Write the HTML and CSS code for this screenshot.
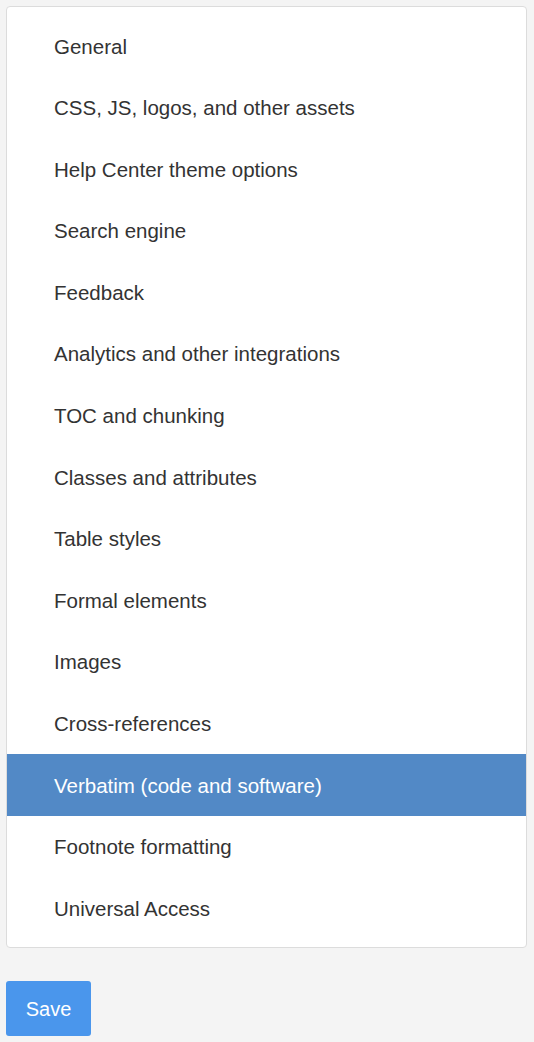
FILE: index.html
```html
<!DOCTYPE html>
<html lang="en">
<head>
<meta charset="utf-8">
<title>Settings</title>
<link rel="stylesheet" href="styles.css">
</head>
<body>
<div class="page">
  <ul class="menu">
    <li class="item">General</li>
    <li class="item">CSS, JS, logos, and other assets</li>
    <li class="item">Help Center theme options</li>
    <li class="item">Search engine</li>
    <li class="item">Feedback</li>
    <li class="item">Analytics and other integrations</li>
    <li class="item">TOC and chunking</li>
    <li class="item">Classes and attributes</li>
    <li class="item">Table styles</li>
    <li class="item">Formal elements</li>
    <li class="item">Images</li>
    <li class="item">Cross-references</li>
    <li class="item active">Verbatim (code and software)</li>
    <li class="item">Footnote formatting</li>
    <li class="item">Universal Access</li>
  </ul>
  <button class="save" type="button">Save</button>
</div>
</body>
</html>
```
FILE: styles.css
```css
html, body {
  margin: 0;
  padding: 0;
  background: #f4f4f4;
}
body {
  font-family: "Liberation Sans", Arial, Helvetica, sans-serif;
  color: #333;
}
.page {
  padding: 6px;
  display: flex;
  flex-direction: column;
  align-items: flex-start;
  gap: 33px;
}
.menu {
  list-style: none;
  margin: 0;
  padding: 8px 0;
  width: 521px;
  box-sizing: border-box;
  background: #fff;
  border: 1px solid #dcdcdc;
  border-radius: 4px;
}
.item {
  padding: 19.5px 47px 18.5px;
  font-size: 20.5px;
  line-height: 23.6px;
  color: #333;
}
.item.active {
  background: #5289c6;
  color: #fff;
}
.save {
  font-family: inherit;
  font-size: 20px;
  line-height: 22px;
  color: #fff;
  background: #4a96ec;
  border: none;
  border-radius: 3px;
  width: 85px;
  height: 55px;
  padding: 2px 0 0;
}
```
